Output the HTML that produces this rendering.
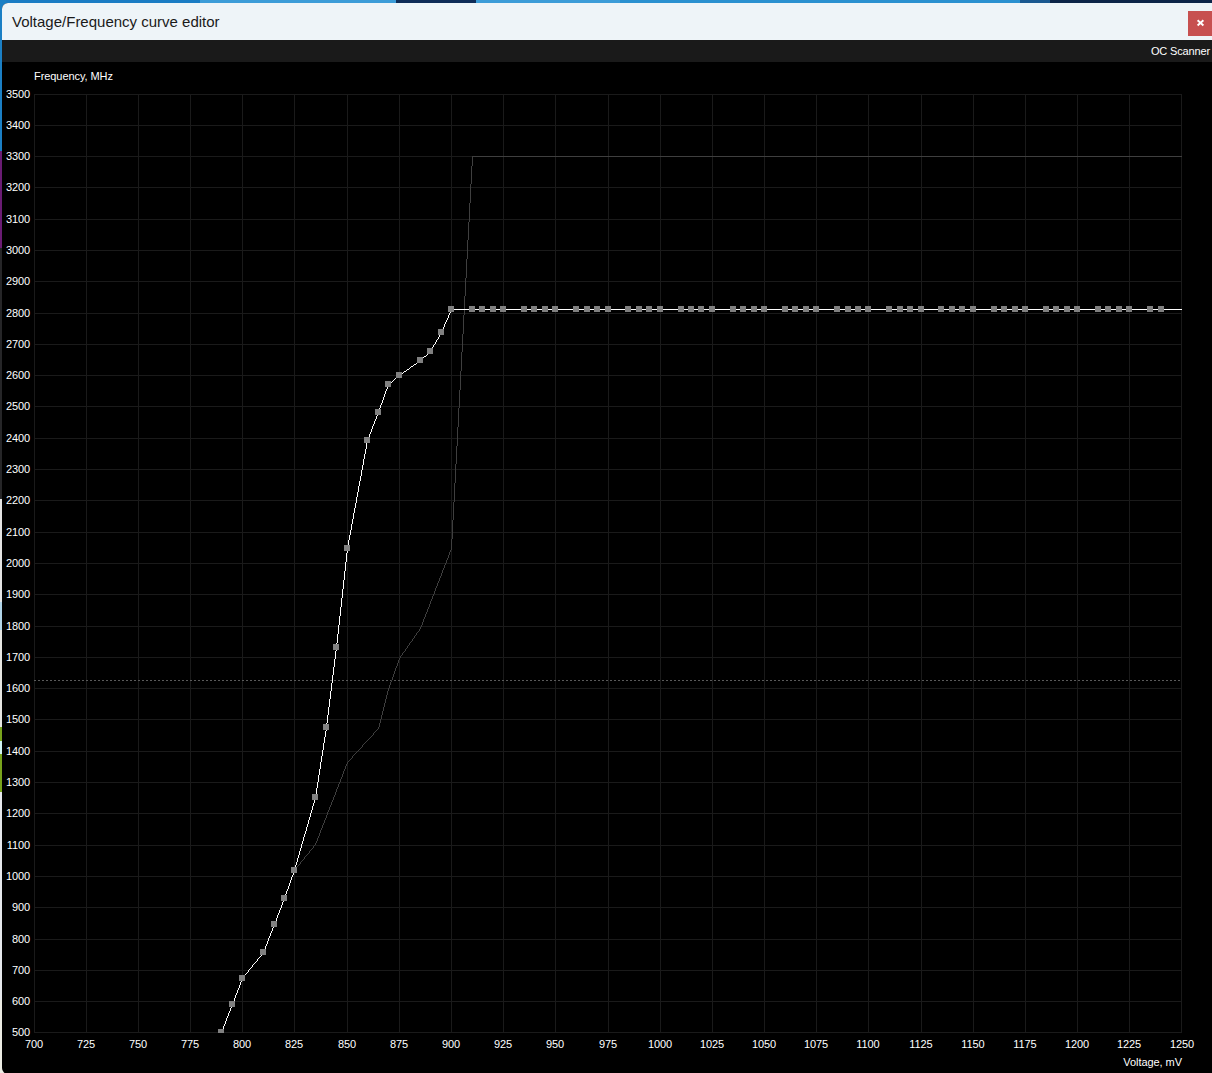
<!DOCTYPE html>
<html><head><meta charset="utf-8"><title>Voltage/Frequency curve editor</title>
<style>
html,body{margin:0;padding:0;}
body{width:1212px;height:1073px;overflow:hidden;position:relative;background:#2a93d3;font-family:"Liberation Sans",sans-serif;}
.bg{position:absolute;}
#win{position:absolute;left:2px;top:3px;width:1214px;height:1071px;background:#000;border-radius:6px 0 0 6px;overflow:hidden;}
#title{position:absolute;left:0;top:0;width:100%;height:37px;background:#eef4f8;}
#title span{position:absolute;left:10px;top:10px;font-size:15px;line-height:18px;color:#1a1a1a;letter-spacing:0;}
#close{position:absolute;left:1186px;top:8px;width:24px;height:25px;background:#c75050;}
#bar{position:absolute;left:0;top:37px;width:100%;height:22px;background:#1a1a1a;}
#bar span{position:absolute;right:6px;top:4px;font-size:11px;line-height:14px;color:#fff;letter-spacing:-0.15px;}
svg{position:absolute;left:0;top:0;}
svg text{font-family:"Liberation Sans",sans-serif;font-size:11px;fill:#fff;}
</style></head><body>

<div class="bg" style="left:0px;top:0;width:200px;height:4px;background:#1a7cc4"></div>
<div class="bg" style="left:200px;top:0;width:196px;height:4px;background:#3c9cd8"></div>
<div class="bg" style="left:396px;top:0;width:80px;height:4px;background:#0e2c58"></div>
<div class="bg" style="left:476px;top:0;width:144px;height:4px;background:#3c9cd8"></div>
<div class="bg" style="left:620px;top:0;width:400px;height:4px;background:#2a90d0"></div>
<div class="bg" style="left:1020px;top:0;width:30px;height:4px;background:#1a5890"></div>
<div class="bg" style="left:1050px;top:0;width:162px;height:4px;background:#0c2448"></div>
<div class="bg" style="left:0;top:0px;width:6px;height:151px;background:#1b7fc4"></div>
<div class="bg" style="left:0;top:151px;width:6px;height:97px;background:#6a1c74"></div>
<div class="bg" style="left:0;top:248px;width:6px;height:251px;background:#262628"></div>
<div class="bg" style="left:0;top:499px;width:6px;height:103px;background:#e4e4e4"></div>
<div class="bg" style="left:0;top:602px;width:6px;height:28px;background:#b0d4e8"></div>
<div class="bg" style="left:0;top:630px;width:6px;height:97px;background:#e6e6e2"></div>
<div class="bg" style="left:0;top:727px;width:6px;height:14px;background:#78a31c"></div>
<div class="bg" style="left:0;top:741px;width:6px;height:13px;background:#d0f4f4"></div>
<div class="bg" style="left:0;top:754px;width:6px;height:38px;background:#78a31c"></div>
<div class="bg" style="left:0;top:792px;width:6px;height:208px;background:#e6e8ec"></div>
<div class="bg" style="left:0;top:1000px;width:6px;height:73px;background:#ecece4"></div>
<div id="win"><div id="title"><span>Voltage/Frequency curve editor</span></div>
<div id="close"><svg width="24" height="25"><path d="M9.6 9.3L15.4 14.5M15.4 9.3L9.6 14.5" stroke="#fff" stroke-width="1.9" fill="none"/></svg></div>
<div id="bar"><span>OC Scanner</span></div></div>
<svg width="1212" height="1073" viewBox="0 0 1212 1073">
<path d="M34.5 94V1033M86.5 94V1033M138.5 94V1033M190.5 94V1033M242.5 94V1033M294.5 94V1033M347.5 94V1033M399.5 94V1033M451.5 94V1033M503.5 94V1033M555.5 94V1033M608.5 94V1033M660.5 94V1033M712.5 94V1033M764.5 94V1033M816.5 94V1033M868.5 94V1033M921.5 94V1033M973.5 94V1033M1025.5 94V1033M1077.5 94V1033M1129.5 94V1033M1181.5 94V1033M34 94.5H1182M34 125.5H1182M34 156.5H1182M34 187.5H1182M34 219.5H1182M34 250.5H1182M34 281.5H1182M34 313.5H1182M34 344.5H1182M34 375.5H1182M34 406.5H1182M34 438.5H1182M34 469.5H1182M34 500.5H1182M34 532.5H1182M34 563.5H1182M34 594.5H1182M34 626.5H1182M34 657.5H1182M34 688.5H1182M34 719.5H1182M34 751.5H1182M34 782.5H1182M34 813.5H1182M34 845.5H1182M34 876.5H1182M34 907.5H1182M34 939.5H1182M34 970.5H1182M34 1001.5H1182M34 1032.5H1182" stroke="#1a1a1a" stroke-width="1" fill="none" shape-rendering="crispEdges"/>
<path d="M34 680.5H1182" stroke="#5a5a5a" stroke-width="1" stroke-dasharray="2 2" fill="none" shape-rendering="crispEdges"/>
<text x="34" y="80" letter-spacing="-0.07">Frequency, MHz</text>
<text x="30" y="98" text-anchor="end" letter-spacing="-0.12">3500</text>
<text x="30" y="129" text-anchor="end" letter-spacing="-0.12">3400</text>
<text x="30" y="160" text-anchor="end" letter-spacing="-0.12">3300</text>
<text x="30" y="191" text-anchor="end" letter-spacing="-0.12">3200</text>
<text x="30" y="223" text-anchor="end" letter-spacing="-0.12">3100</text>
<text x="30" y="254" text-anchor="end" letter-spacing="-0.12">3000</text>
<text x="30" y="285" text-anchor="end" letter-spacing="-0.12">2900</text>
<text x="30" y="317" text-anchor="end" letter-spacing="-0.12">2800</text>
<text x="30" y="348" text-anchor="end" letter-spacing="-0.12">2700</text>
<text x="30" y="379" text-anchor="end" letter-spacing="-0.12">2600</text>
<text x="30" y="410" text-anchor="end" letter-spacing="-0.12">2500</text>
<text x="30" y="442" text-anchor="end" letter-spacing="-0.12">2400</text>
<text x="30" y="473" text-anchor="end" letter-spacing="-0.12">2300</text>
<text x="30" y="504" text-anchor="end" letter-spacing="-0.12">2200</text>
<text x="30" y="536" text-anchor="end" letter-spacing="-0.12">2100</text>
<text x="30" y="567" text-anchor="end" letter-spacing="-0.12">2000</text>
<text x="30" y="598" text-anchor="end" letter-spacing="-0.12">1900</text>
<text x="30" y="630" text-anchor="end" letter-spacing="-0.12">1800</text>
<text x="30" y="661" text-anchor="end" letter-spacing="-0.12">1700</text>
<text x="30" y="692" text-anchor="end" letter-spacing="-0.12">1600</text>
<text x="30" y="723" text-anchor="end" letter-spacing="-0.12">1500</text>
<text x="30" y="755" text-anchor="end" letter-spacing="-0.12">1400</text>
<text x="30" y="786" text-anchor="end" letter-spacing="-0.12">1300</text>
<text x="30" y="817" text-anchor="end" letter-spacing="-0.12">1200</text>
<text x="30" y="849" text-anchor="end" letter-spacing="-0.12">1100</text>
<text x="30" y="880" text-anchor="end" letter-spacing="-0.12">1000</text>
<text x="30" y="911" text-anchor="end" letter-spacing="-0.12">900</text>
<text x="30" y="943" text-anchor="end" letter-spacing="-0.12">800</text>
<text x="30" y="974" text-anchor="end" letter-spacing="-0.12">700</text>
<text x="30" y="1005" text-anchor="end" letter-spacing="-0.12">600</text>
<text x="30" y="1036" text-anchor="end" letter-spacing="-0.12">500</text>
<text x="34" y="1048" text-anchor="middle" letter-spacing="-0.1">700</text>
<text x="86" y="1048" text-anchor="middle" letter-spacing="-0.1">725</text>
<text x="138" y="1048" text-anchor="middle" letter-spacing="-0.1">750</text>
<text x="190" y="1048" text-anchor="middle" letter-spacing="-0.1">775</text>
<text x="242" y="1048" text-anchor="middle" letter-spacing="-0.1">800</text>
<text x="294" y="1048" text-anchor="middle" letter-spacing="-0.1">825</text>
<text x="347" y="1048" text-anchor="middle" letter-spacing="-0.1">850</text>
<text x="399" y="1048" text-anchor="middle" letter-spacing="-0.1">875</text>
<text x="451" y="1048" text-anchor="middle" letter-spacing="-0.1">900</text>
<text x="503" y="1048" text-anchor="middle" letter-spacing="-0.1">925</text>
<text x="555" y="1048" text-anchor="middle" letter-spacing="-0.1">950</text>
<text x="608" y="1048" text-anchor="middle" letter-spacing="-0.1">975</text>
<text x="660" y="1048" text-anchor="middle" letter-spacing="-0.1">1000</text>
<text x="712" y="1048" text-anchor="middle" letter-spacing="-0.1">1025</text>
<text x="764" y="1048" text-anchor="middle" letter-spacing="-0.1">1050</text>
<text x="816" y="1048" text-anchor="middle" letter-spacing="-0.1">1075</text>
<text x="868" y="1048" text-anchor="middle" letter-spacing="-0.1">1100</text>
<text x="921" y="1048" text-anchor="middle" letter-spacing="-0.1">1125</text>
<text x="973" y="1048" text-anchor="middle" letter-spacing="-0.1">1150</text>
<text x="1025" y="1048" text-anchor="middle" letter-spacing="-0.1">1175</text>
<text x="1077" y="1048" text-anchor="middle" letter-spacing="-0.1">1200</text>
<text x="1129" y="1048" text-anchor="middle" letter-spacing="-0.1">1225</text>
<text x="1182" y="1048" text-anchor="middle" letter-spacing="-0.1">1250</text>
<text x="1182" y="1066" text-anchor="end" letter-spacing="-0.05">Voltage, mV</text>
<path d="M472 156h710v1h-710zM294 870h1v1h-1zM295 869h1v1h-1zM296 867h1v2h-1zM297 866h1v1h-1zM298 865h1v1h-1zM299 864h1v1h-1zM300 862h1v2h-1zM301 861h1v1h-1zM302 860h1v1h-1zM303 859h1v1h-1zM304 857h1v2h-1zM305 856h1v1h-1zM306 855h1v1h-1zM307 854h1v1h-1zM308 853h1v1h-1zM309 851h1v2h-1zM310 850h1v1h-1zM311 849h1v1h-1zM312 848h1v1h-1zM313 846h1v2h-1zM314 845h1v1h-1zM315 843h1v2h-1zM316 841h1v2h-1zM317 838h1v3h-1zM318 836h1v2h-1zM319 833h1v3h-1zM320 830h1v3h-1zM321 828h1v2h-1zM322 825h1v3h-1zM323 823h1v2h-1zM324 820h1v3h-1zM325 818h1v2h-1zM326 815h1v3h-1zM327 812h1v3h-1zM328 810h1v2h-1zM329 807h1v3h-1zM330 805h1v2h-1zM331 802h1v3h-1zM332 800h1v2h-1zM333 797h1v3h-1zM334 795h1v2h-1zM335 792h1v3h-1zM336 789h1v3h-1zM337 787h1v2h-1zM338 784h1v3h-1zM339 782h1v2h-1zM340 779h1v3h-1zM341 777h1v2h-1zM342 774h1v3h-1zM343 771h1v3h-1zM344 769h1v2h-1zM345 766h1v3h-1zM346 764h1v2h-1zM347 762h1v2h-1zM348 761h1v1h-1zM349 760h1v1h-1zM350 759h1v1h-1zM351 758h1v1h-1zM352 756h1v2h-1zM353 755h1v1h-1zM354 754h1v1h-1zM355 753h1v1h-1zM356 752h1v1h-1zM357 751h1v1h-1zM358 750h1v1h-1zM359 749h1v1h-1zM360 748h1v1h-1zM361 747h1v1h-1zM362 745h1v2h-1zM363 744h1v1h-1zM364 743h1v1h-1zM365 742h1v1h-1zM366 741h1v1h-1zM367 740h1v1h-1zM368 739h1v1h-1zM369 738h1v1h-1zM370 737h1v1h-1zM371 736h1v1h-1zM372 735h1v1h-1zM373 733h1v2h-1zM374 732h1v1h-1zM375 731h1v1h-1zM376 730h1v1h-1zM377 729h1v1h-1zM378 727h1v2h-1zM379 723h1v4h-1zM380 719h1v4h-1zM381 715h1v4h-1zM382 711h1v4h-1zM383 707h1v4h-1zM384 703h1v4h-1zM385 699h1v4h-1zM386 695h1v4h-1zM387 691h1v4h-1zM388 688h1v3h-1zM389 685h1v3h-1zM390 682h1v3h-1zM391 680h1v2h-1zM392 677h1v3h-1zM393 674h1v3h-1zM394 671h1v3h-1zM395 668h1v3h-1zM396 666h1v2h-1zM397 663h1v3h-1zM398 660h1v3h-1zM399 658h1v2h-1zM400 656h1v2h-1zM401 655h1v1h-1zM402 653h1v2h-1zM403 652h1v1h-1zM404 651h1v1h-1zM405 649h1v2h-1zM406 648h1v1h-1zM407 646h1v2h-1zM408 645h1v1h-1zM409 643h1v2h-1zM410 642h1v1h-1zM411 641h1v1h-1zM412 639h1v2h-1zM413 638h1v1h-1zM414 636h1v2h-1zM415 635h1v1h-1zM416 633h1v2h-1zM417 632h1v1h-1zM418 631h1v1h-1zM419 629h1v2h-1zM420 627h1v2h-1zM421 625h1v2h-1zM422 622h1v3h-1zM423 619h1v3h-1zM424 617h1v2h-1zM425 614h1v3h-1zM426 612h1v2h-1zM427 609h1v3h-1zM428 607h1v2h-1zM429 604h1v3h-1zM430 601h1v3h-1zM431 599h1v2h-1zM432 596h1v3h-1zM433 594h1v2h-1zM434 591h1v3h-1zM435 588h1v3h-1zM436 586h1v2h-1zM437 583h1v3h-1zM438 581h1v2h-1zM439 578h1v3h-1zM440 576h1v2h-1zM441 573h1v3h-1zM442 570h1v3h-1zM443 568h1v2h-1zM444 565h1v3h-1zM445 563h1v2h-1zM446 560h1v3h-1zM447 558h1v2h-1zM448 555h1v3h-1zM449 552h1v3h-1zM450 550h1v2h-1zM451 539h1v11h-1zM452 520h1v19h-1zM453 502h1v18h-1zM454 483h1v19h-1zM455 464h1v19h-1zM456 446h1v18h-1zM457 427h1v19h-1zM458 408h1v19h-1zM459 390h1v18h-1zM460 371h1v19h-1zM461 352h1v19h-1zM462 334h1v18h-1zM463 315h1v19h-1zM464 296h1v19h-1zM465 278h1v18h-1zM466 259h1v19h-1zM467 240h1v19h-1zM468 222h1v18h-1zM469 203h1v19h-1zM470 184h1v19h-1zM471 166h1v18h-1zM472 157h1v9h-1z" fill="#3f3f3f" shape-rendering="crispEdges"/>
<clipPath id="c"><rect x="34" y="90" width="1148" height="943"/></clipPath>
<g clip-path="url(#c)"><path d="M451 309h731v1h-731zM221 1031h1v2h-1zM222 1029h1v2h-1zM223 1026h1v3h-1zM224 1024h1v2h-1zM225 1021h1v3h-1zM226 1018h1v3h-1zM227 1016h1v2h-1zM228 1013h1v3h-1zM229 1011h1v2h-1zM230 1008h1v3h-1zM231 1006h1v2h-1zM232 1003h1v3h-1zM233 1001h1v2h-1zM234 998h1v3h-1zM235 995h1v3h-1zM236 993h1v2h-1zM237 990h1v3h-1zM238 988h1v2h-1zM239 985h1v3h-1zM240 982h1v3h-1zM241 980h1v2h-1zM242 978h1v2h-1zM243 977h1v1h-1zM244 975h1v2h-1zM245 974h1v1h-1zM246 973h1v1h-1zM247 972h1v1h-1zM248 970h1v2h-1zM249 969h1v1h-1zM250 968h1v1h-1zM251 967h1v1h-1zM252 965h1v2h-1zM253 964h1v1h-1zM254 963h1v1h-1zM255 962h1v1h-1zM256 961h1v1h-1zM257 959h1v2h-1zM258 958h1v1h-1zM259 957h1v1h-1zM260 956h1v1h-1zM261 954h1v2h-1zM262 953h1v1h-1zM263 951h1v2h-1zM264 949h1v2h-1zM265 946h1v3h-1zM266 944h1v2h-1zM267 941h1v3h-1zM268 938h1v3h-1zM269 936h1v2h-1zM270 933h1v3h-1zM271 931h1v2h-1zM272 928h1v3h-1zM273 926h1v2h-1zM274 923h1v3h-1zM275 921h1v2h-1zM276 918h1v3h-1zM277 915h1v3h-1zM278 913h1v2h-1zM279 910h1v3h-1zM280 908h1v2h-1zM281 905h1v3h-1zM282 902h1v3h-1zM283 900h1v2h-1zM284 897h1v3h-1zM285 894h1v3h-1zM286 891h1v3h-1zM287 889h1v2h-1zM288 886h1v3h-1zM289 883h1v3h-1zM290 880h1v3h-1zM291 877h1v3h-1zM292 875h1v2h-1zM293 872h1v3h-1zM294 869h1v3h-1zM295 865h1v4h-1zM296 862h1v3h-1zM297 858h1v4h-1zM298 855h1v3h-1zM299 851h1v4h-1zM300 848h1v3h-1zM301 844h1v4h-1zM302 841h1v3h-1zM303 837h1v4h-1zM304 834h1v3h-1zM305 831h1v3h-1zM306 827h1v4h-1zM307 824h1v3h-1zM308 820h1v4h-1zM309 817h1v3h-1zM310 813h1v4h-1zM311 810h1v3h-1zM312 806h1v4h-1zM313 803h1v3h-1zM314 799h1v4h-1zM315 794h1v5h-1zM316 788h1v6h-1zM317 782h1v6h-1zM318 775h1v7h-1zM319 769h1v6h-1zM320 762h1v7h-1zM321 756h1v6h-1zM322 750h1v6h-1zM323 743h1v7h-1zM324 737h1v6h-1zM325 731h1v6h-1zM326 723h1v8h-1zM327 715h1v8h-1zM328 707h1v8h-1zM329 699h1v8h-1zM330 691h1v8h-1zM331 683h1v8h-1zM332 675h1v8h-1zM333 667h1v8h-1zM334 659h1v8h-1zM335 651h1v8h-1zM336 643h1v8h-1zM337 634h1v9h-1zM338 625h1v9h-1zM339 616h1v9h-1zM340 607h1v9h-1zM341 598h1v9h-1zM342 589h1v9h-1zM343 580h1v9h-1zM344 571h1v9h-1zM345 562h1v9h-1zM346 553h1v9h-1zM347 546h1v7h-1zM348 540h1v6h-1zM349 535h1v5h-1zM350 530h1v5h-1zM351 524h1v6h-1zM352 519h1v5h-1zM353 513h1v6h-1zM354 508h1v5h-1zM355 503h1v5h-1zM356 497h1v6h-1zM357 492h1v5h-1zM358 486h1v6h-1zM359 481h1v5h-1zM360 476h1v5h-1zM361 470h1v6h-1zM362 465h1v5h-1zM363 459h1v6h-1zM364 454h1v5h-1zM365 449h1v5h-1zM366 443h1v6h-1zM367 439h1v4h-1zM368 437h1v2h-1zM369 434h1v3h-1zM370 432h1v2h-1zM371 429h1v3h-1zM372 426h1v3h-1zM373 424h1v2h-1zM374 421h1v3h-1zM375 419h1v2h-1zM376 416h1v3h-1zM377 414h1v2h-1zM378 411h1v3h-1zM379 408h1v3h-1zM380 405h1v3h-1zM381 403h1v2h-1zM382 400h1v3h-1zM383 397h1v3h-1zM384 394h1v3h-1zM385 391h1v3h-1zM386 389h1v2h-1zM387 386h1v3h-1zM388 384h1v2h-1zM389 383h1v1h-1zM390 382h1v1h-1zM391 382h1v1h-1zM392 381h1v1h-1zM393 380h1v1h-1zM394 379h1v1h-1zM395 378h1v1h-1zM396 377h1v1h-1zM397 377h1v1h-1zM398 376h1v1h-1zM399 375h1v1h-1zM400 374h1v1h-1zM401 374h1v1h-1zM402 373h1v1h-1zM403 372h1v1h-1zM404 371h1v1h-1zM405 371h1v1h-1zM406 370h1v1h-1zM407 369h1v1h-1zM408 369h1v1h-1zM409 368h1v1h-1zM410 367h1v1h-1zM411 366h1v1h-1zM412 366h1v1h-1zM413 365h1v1h-1zM414 364h1v1h-1zM415 364h1v1h-1zM416 363h1v1h-1zM417 362h1v1h-1zM418 361h1v1h-1zM419 361h1v1h-1zM420 360h1v1h-1zM421 359h1v1h-1zM422 358h1v1h-1zM423 357h1v1h-1zM424 356h1v1h-1zM425 356h1v1h-1zM426 355h1v1h-1zM427 354h1v1h-1zM428 353h1v1h-1zM429 352h1v1h-1zM430 351h1v1h-1zM431 349h1v2h-1zM432 347h1v2h-1zM433 345h1v2h-1zM434 344h1v1h-1zM435 342h1v2h-1zM436 340h1v2h-1zM437 339h1v1h-1zM438 337h1v2h-1zM439 335h1v2h-1zM440 333h1v2h-1zM441 331h1v2h-1zM442 329h1v2h-1zM443 327h1v2h-1zM444 324h1v3h-1zM445 322h1v2h-1zM446 320h1v2h-1zM447 318h1v2h-1zM448 315h1v3h-1zM449 313h1v2h-1zM450 311h1v2h-1zM451 310h1v1h-1z" fill="#fff" shape-rendering="crispEdges"/>
<path d="M218 1029h6v6h-6zM229 1001h6v6h-6zM239 975h6v6h-6zM260 949h6v6h-6zM271 921h6v6h-6zM281 895h6v6h-6zM291 867h6v6h-6zM312 794h6v6h-6zM323 724h6v6h-6zM333 644h6v6h-6zM344 545h6v6h-6zM364 437h6v6h-6zM375 409h6v6h-6zM385 381h6v6h-6zM396 372h6v6h-6zM417 357h6v6h-6zM427 348h6v6h-6zM438 329h6v6h-6zM448 306h6v6h-6zM469 306h6v6h-6zM479 306h6v6h-6zM490 306h6v6h-6zM500 306h6v6h-6zM521 306h6v6h-6zM531 306h6v6h-6zM542 306h6v6h-6zM552 306h6v6h-6zM573 306h6v6h-6zM584 306h6v6h-6zM594 306h6v6h-6zM605 306h6v6h-6zM625 306h6v6h-6zM636 306h6v6h-6zM646 306h6v6h-6zM657 306h6v6h-6zM678 306h6v6h-6zM688 306h6v6h-6zM698 306h6v6h-6zM709 306h6v6h-6zM730 306h6v6h-6zM740 306h6v6h-6zM751 306h6v6h-6zM761 306h6v6h-6zM782 306h6v6h-6zM792 306h6v6h-6zM803 306h6v6h-6zM813 306h6v6h-6zM834 306h6v6h-6zM845 306h6v6h-6zM855 306h6v6h-6zM865 306h6v6h-6zM886 306h6v6h-6zM897 306h6v6h-6zM907 306h6v6h-6zM918 306h6v6h-6zM938 306h6v6h-6zM949 306h6v6h-6zM959 306h6v6h-6zM970 306h6v6h-6zM991 306h6v6h-6zM1001 306h6v6h-6zM1012 306h6v6h-6zM1022 306h6v6h-6zM1043 306h6v6h-6zM1053 306h6v6h-6zM1064 306h6v6h-6zM1074 306h6v6h-6zM1095 306h6v6h-6zM1105 306h6v6h-6zM1116 306h6v6h-6zM1126 306h6v6h-6zM1147 306h6v6h-6zM1158 306h6v6h-6z" fill="#808080" shape-rendering="crispEdges"/></g>
</svg>
</body></html>
